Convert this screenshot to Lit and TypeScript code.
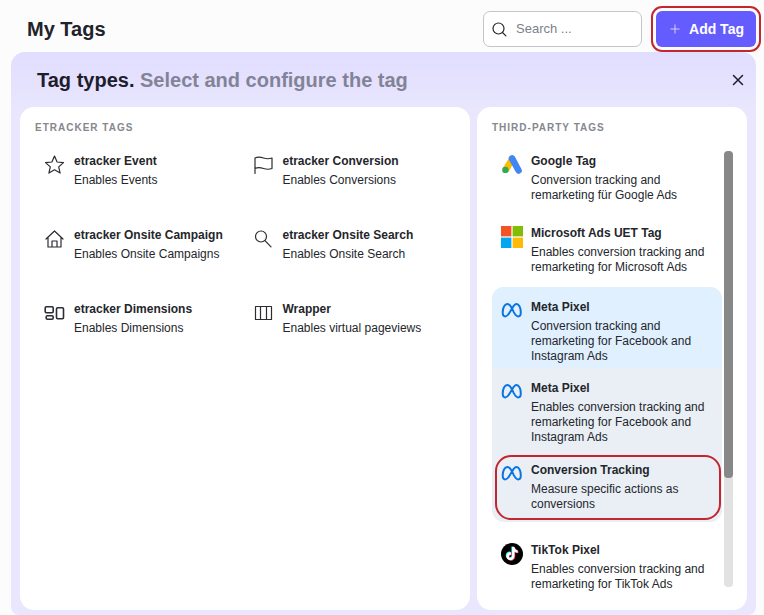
import { LitElement, html, css, svg } from "lit";
import { customElement, property, state } from "lit/decorators.js";
import { classMap } from "lit/directives/class-map.js";

interface Tag {
  icon: string;
  title: string;
  text: string;
}

const ETRACKER_TAGS: Tag[] = [
  { icon: "star", title: "etracker Event", text: "Enables Events" },
  { icon: "flag", title: "etracker Conversion", text: "Enables Conversions" },
  { icon: "home", title: "etracker Onsite Campaign", text: "Enables Onsite Campaigns" },
  { icon: "search", title: "etracker Onsite Search", text: "Enables Onsite Search" },
  { icon: "blocks", title: "etracker Dimensions", text: "Enables Dimensions" },
  { icon: "columns", title: "Wrapper", text: "Enables virtual pageviews" },
];

const GOOGLE: Tag = { icon: "google", title: "Google Tag", text: "Conversion tracking and remarketing für Google Ads" };
const MICROSOFT: Tag = { icon: "microsoft", title: "Microsoft Ads UET Tag", text: "Enables conversion tracking and remarketing for Microsoft Ads" };
const META: Tag = { icon: "meta", title: "Meta Pixel", text: "Conversion tracking and remarketing for Facebook and Instagram Ads" };
const META_PIXEL: Tag = { icon: "meta", title: "Meta Pixel", text: "Enables conversion tracking and remarketing for Facebook and Instagram Ads" };
const META_CONVERSION: Tag = { icon: "meta", title: "Conversion Tracking", text: "Measure specific actions as conversions" };
const TIKTOK: Tag = { icon: "tiktok", title: "TikTok Pixel", text: "Enables conversion tracking and remarketing for TikTok Ads" };

const NOTE = "M12.900 4.100c.3 1.900 1.400 3 3.200 3.200v2.400c-1.200 0-2.300-.4-3.200-1v4.300c0 2.500-1.900 4.200-4.100 4.200s-4-1.700-4-4c0-2.600 2.100-4.300 4.700-4v2.500c-1.200-.3-2.200.4-2.200 1.500 0 1 .7 1.600 1.600 1.600s1.600-.7 1.600-1.700v-9z";

const ICONS: Record<string, unknown> = {
  star: svg`<path class="line" d="M10.500 2l2.600 6 6.400.6-4.800 4.300 1.400 6.200-5.600-3.300-5.600 3.300 1.400-6.200-4.800-4.300 6.400-.6z"/>`,
  flag: svg`<path class="line" d="M2 19.500V4c3-1.400 5.500-1 8.500 0s5.500 1.200 8.500 0v10.500c-3 1.200-5.500 1-8.500 0s-5.500-1.400-8.500 0"/>`,
  home: svg`<path class="line" d="M2 11l8.500-8 8.500 8M4 9.300v9.700h13V9.300M8 19v-6h5v6"/>`,
  search: svg`<circle class="line" cx="8" cy="8.500" r="5.500"/><path class="line" d="M12 12.600l6 6.200"/>`,
  blocks: svg`<rect class="bold" x="1.200" y="4.700" width="8" height="6" rx="1.200"/><rect class="bold" x="2.200" y="13.700" width="7" height="3.600" rx="1.200"/><rect class="bold" x="12.500" y="5.700" width="7" height="11" rx="1.200"/>`,
  columns: svg`<path class="line" d="M2.500 4.500h16v13h-16zM7.500 4.500v13M13.500 4.500v13"/>`,
  google: svg`<path fill="#fbbc04" d="M1.800 14.300L8.800 2.700l5.500 3.200-6.800 12z"/><path fill="#4285f4" d="M8.100 5.900a3.300 3.300 0 0 1 5.700-3.300l6.600 12.300a3.200 3.200 0 0 1-5.600 3.200z"/><circle fill="#34a853" cx="4.400" cy="15.900" r="3.200"/>`,
  microsoft: svg`<path fill="#f35325" d="M0 0h10.400v10.400H0z"/><path fill="#81bc06" d="M11.600 0H22v10.400H11.600z"/><path fill="#05a6f0" d="M0 11.600h10.400V22H0z"/><path fill="#ffba08" d="M11.600 11.600H22V22H11.600z"/>`,
  meta: svg`<path fill="none" stroke="#0a74e2" stroke-width="2" stroke-linecap="round" stroke-linejoin="round" d="M10.500 7.500C9.200 5 8 4 6.300 4 3.700 4 1.700 8 1.700 12.200c0 2.600.9 4.200 2.700 4.200 1.700 0 2.700-1.200 4.500-4.400L11.400 8C12.700 5.600 13.800 4 15.500 4c2.400 0 4.300 3.700 4.300 8.200 0 2.600-.9 4.200-2.700 4.200-1.700 0-2.500-.9-4.300-4.300L10.500 7.500"/>`,
  tiktok: svg`<circle cx="11" cy="11" r="11"/><g transform="translate(.6 0)"><path fill="#25f4ee" transform="translate(-.7 -.6)" d=${NOTE}/><path fill="#fe2c55" transform="translate(.7 .6)" d=${NOTE}/><path fill="#fff" d=${NOTE}/></g>`,
};

@customElement("tag-item")
export class TagItem extends LitElement {
  @property({ attribute: false }) tag!: Tag;

  static styles = css`
    :host {
      display: block;
    }
    .item {
      display: grid;
      grid-template-columns: 22px 1fr;
      column-gap: 8px;
      width: 100%;
      padding: 11px 9px 10px;
      border: 0;
      background: none;
      color: #24262b;
      font: 12px/15px "Liberation Sans", Arial, sans-serif;
      text-align: left;
      cursor: pointer;
    }
    .icon {
      width: 22px;
      height: 22px;
      margin-top: 2px;
    }
    .line,
    .bold {
      fill: none;
      stroke: #2b2d33;
      stroke-width: 1.2;
      stroke-linejoin: round;
      stroke-linecap: round;
    }
    .bold {
      stroke-width: 1.6;
    }
    .copy {
      display: flex;
      flex-direction: column;
      gap: 3px;
    }
    .title {
      font-weight: 700;
      line-height: 18px;
    }
  `;

  render() {
    return html`<button class="item" type="button">
      <svg class="icon" viewBox="0 0 22 22" aria-hidden="true">${ICONS[this.tag.icon]}</svg>
      <span class="copy">
        <span class="title">${this.tag.title}</span>
        <span>${this.tag.text}</span>
      </span>
    </button>`;
  }
}

@customElement("app-root")
export class AppRoot extends LitElement {
  @state() private open = true;

  static styles = css`
    * {
      box-sizing: border-box;
    }
    :host {
      display: flex;
      flex-direction: column;
      height: 100vh;
      min-height: 560px;
      padding: 0 8px 0 11px;
      box-sizing: border-box;
      background: #fcfcfd;
      color: #212328;
      font: 12px/15px "Liberation Sans", Arial, sans-serif;
    }
    h1,
    h2,
    h3 {
      margin: 0;
    }
    .top {
      display: flex;
      align-items: center;
      gap: 14px;
      padding: 11px 0 5px 16px;
    }
    .heading {
      flex: 1;
      font-size: 20px;
      line-height: 24px;
    }
    .search {
      display: flex;
      align-items: center;
      gap: 9px;
      width: 159px;
      height: 36px;
      padding: 0 8px;
      border: 1px solid #c2c5ca;
      border-radius: 7px;
      background: #fff;
    }
    .glass {
      flex: none;
      width: 15px;
      height: 15px;
    }
    .field {
      width: 100%;
      min-width: 0;
      padding: 0;
      border: 0;
      outline: 0;
      background: none;
      color: inherit;
      font: 13px/18px "Liberation Sans", Arial, sans-serif;
    }
    .field::placeholder {
      color: #7d8189;
      opacity: 1;
    }
    .add {
      display: flex;
      align-items: center;
      justify-content: center;
      gap: 9px;
      width: 100px;
      height: 36px;
      padding: 0 0 0 2px;
      border: 0;
      border-radius: 6px;
      outline: 2px solid #c4262e;
      outline-offset: 3px;
      background: #655cff;
      color: #fff;
      font: 700 14px/18px "Liberation Sans", Arial, sans-serif;
      position: relative;
      z-index: 1;
    }
    .panel {
      display: flex;
      flex: 1;
      flex-direction: column;
      min-height: 0;
      padding: 0 9px 5px;
      border-radius: 14px 14px 8px 8px;
      background: linear-gradient(#e1ddff, #e9e6fd 60px);
    }
    .hidden {
      display: none;
    }
    .bar {
      display: flex;
      align-items: center;
      justify-content: space-between;
      height: 55px;
      flex: none;
      padding: 0 3px 0 17px;
    }
    .bar h2 {
      font-size: 20px;
      line-height: 24px;
      color: #1d1d2b;
    }
    .muted {
      color: #828397;
    }
    .close {
      display: flex;
      padding: 0;
      border: 0;
      background: none;
    }
    .cards {
      display: grid;
      grid-template-columns: 5fr 3fr;
      gap: 7px;
      flex: 1;
      min-height: 0;
    }
    .card {
      display: flex;
      flex-direction: column;
      min-height: 0;
      padding: 14px 14px 14px 15px;
      border-radius: 14px;
      background: #fff;
    }
    .card h3 {
      color: #85888e;
      font-size: 10px;
      line-height: 14px;
      letter-spacing: 1px;
      text-transform: uppercase;
      padding-bottom: 6px;
    }
    .grid {
      display: grid;
      grid-template-columns: 1fr 1fr;
      grid-auto-rows: 74px;
      padding-right: 4px;
    }
    .scroll {
      display: flex;
      gap: 2px;
      flex: 1;
      min-height: 0;
    }
    .list {
      flex: 1;
      min-width: 0;
      overflow-y: auto;
      scrollbar-width: none;
    }
    .group {
      margin: 2px 0 8px;
      border-radius: 12px;
      overflow: hidden;
      background: #e9eff5;
    }
    .lead {
      background: #e0f0ff;
      height: 81px;
    }
    .child {
      height: 82px;
    }
    .marked {
      position: relative;
    }
    .marked::after {
      content: "";
      position: absolute;
      inset: 5px 1px 2px 3px;
      border: 2px solid #c4262e;
      border-radius: 16px;
      pointer-events: none;
    }
    .track {
      width: 9px;
      margin: 10px 0 9px;
      border-radius: 4px;
      background: #e2e2e2;
    }
    .thumb {
      height: 75%;
      border-radius: 4px;
      background: #888;
    }
  `;

  render() {
    return html`
      <header class="top">
        <h1 class="heading">My Tags</h1>
        <label class="search">
          <svg class="glass" viewBox="0 0 15 15" fill="none" stroke="#25272c" stroke-width="1.200" stroke-linecap="round" aria-hidden="true">
            <circle cx="6.500" cy="6.500" r="5.500" />
            <path d="M10.500 10.500l3.400 3.400" />
          </svg>
          <input class="field" type="search" placeholder="Search ..." aria-label="Search" />
        </label>
        <button class="add" type="button" @click=${() => (this.open = true)}>
          <svg width="10" height="10" viewBox="0 0 10 10" stroke="#d5d2ff" aria-hidden="true"><path d="M5 .5v9M.5 5h9" /></svg>
          Add Tag
        </button>
      </header>
      <main class=${classMap({ panel: true, hidden: !this.open })}>
        <div class="bar">
          <h2>Tag types. <span class="muted">Select and configure the tag</span></h2>
          <button class="close" type="button" aria-label="Close" @click=${() => (this.open = false)}>
            <svg width="12" height="12" viewBox="0 0 12 12" stroke="#1d1d2b" stroke-width="1.500" stroke-linecap="round" aria-hidden="true"><path d="M1.500 1.500l9 9M10.500 1.500l-9 9" /></svg>
          </button>
        </div>
        <div class="cards">
          <section class="card">
            <h3>etracker Tags</h3>
            <div class="grid">${ETRACKER_TAGS.map((tag) => html`<tag-item .tag=${tag}></tag-item>`)}</div>
          </section>
          <section class="card">
            <h3>Third-Party Tags</h3>
            <div class="scroll">
              <div class="list">
                <tag-item .tag=${GOOGLE}></tag-item>
                <tag-item .tag=${MICROSOFT}></tag-item>
                <div class="group">
                  <tag-item class="lead" .tag=${META}></tag-item>
                  <tag-item class="child" .tag=${META_PIXEL}></tag-item>
                  <tag-item class="marked" .tag=${META_CONVERSION}></tag-item>
                </div>
                <tag-item .tag=${TIKTOK}></tag-item>
              </div>
              <div class="track"><div class="thumb"></div></div>
            </div>
          </section>
        </div>
      </main>
    `;
  }
}
